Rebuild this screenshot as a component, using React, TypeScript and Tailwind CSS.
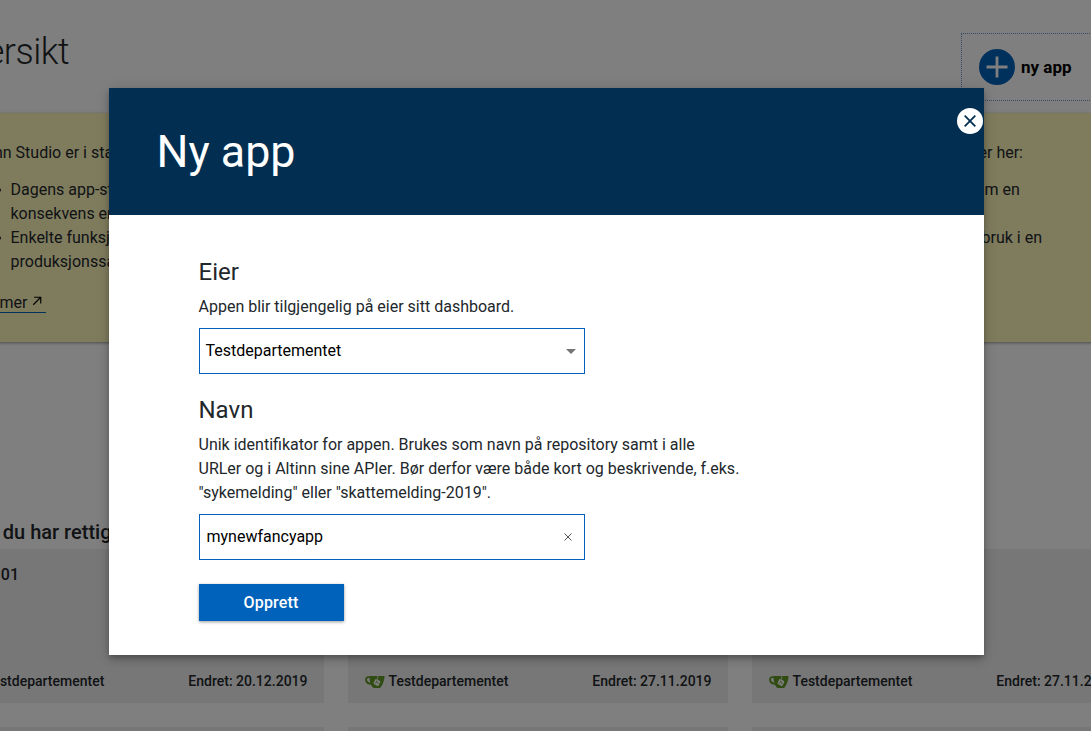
import React from "react";

function CupIcon() {
  return (
    <svg viewBox="0 0 20 14" className="h-[14px] w-5 shrink-0 translate-y-px">
      <path
        d="M5.500 2.300C2.800 1.700 1 2.400 1 4.600c.1 2.500 2.200 4 5.500 4.200"
        fill="none"
        stroke="#609926"
        strokeWidth="1.900"
      />
      <path
        d="M4.600.900h14.200c.7 0 .9.500.8 1.100-.6 3.800-1.700 7.400-3.600 10-.5.600-1 1-1.800 1.100H9.100c-.8 0-1.300-.4-1.700-1C5.500 9.500 4.400 5.500 4.600.900z"
        fill="#609926"
      />
      <path d="M12.700 1.200v3.300" stroke="#fff" strokeWidth=".7" />
      <rect x="9.100" y="4.700" width="5.600" height="5.600" rx="1.200" transform="rotate(26 11.900 7.500)" fill="#fff" />
      <path d="M11.900 5.600l-1.400 3M11.600 6.700l1.600.8-.7 1.600" fill="none" stroke="#609926" strokeWidth=".7" />
    </svg>
  );
}

function AppCard({ name, date }: { name: string; date: string }) {
  return (
    <div className="flex h-[154px] flex-col justify-between bg-[#efefef] pt-[14px] pr-[16.500px] pb-3 pl-4">
      <div className="w-[59px] text-right text-base leading-6 font-medium">{name}</div>
      <div className="flex items-center justify-between text-sm leading-5 font-medium">
        <div className="flex items-center gap-1 pl-[0.500px]">
          <CupIcon />
          <span>Testdepartementet</span>
        </div>
        <span>Endret: {date}</span>
      </div>
    </div>
  );
}

function Dashboard() {
  return (
    <div className="-ml-14 w-[1188px] shrink-0 text-[#22272b]">
      <header className="flex h-[113px] items-start justify-between pt-[33px]">
        <h1 className="w-[125px] text-right text-[36px] leading-[38px] font-light tracking-[-0.5px]">ersikt</h1>
        <div className="flex h-[68px] w-[171px] items-center gap-[6.500px] border border-dotted border-[#5f9bd3] pl-[16.500px]">
          <svg viewBox="0 0 36 36" className="size-9">
            <circle cx="18" cy="18" r="18" fill="#0062ba" />
            <path d="M18 7.500v21M7.500 18h21" stroke="#fff" strokeWidth="2.800" />
          </svg>
          <span className="text-[17px] leading-6 font-bold text-black">ny app</span>
        </div>
      </header>
      <section className="h-[229px] bg-[#fff8bd] px-6 pt-7 text-base leading-6 shadow-[0_1px_3px_rgba(0,0,0,0.4)]">
        <div className="flex justify-between">
          <p className="pl-[2.500px]">Altinn Studio er i stadig</p>
          <p className="w-[133px] pl-[3.500px]">er her:</p>
        </div>
        <ul className="mt-[13px] pl-[29px]">
          <li className="flex">
            <span className="mt-[10px] mr-[9.500px] size-1 rounded-full bg-current" />
            <p className="grow">
              Dagens app-stu
              <br />
              konsekvens er
            </p>
            <p className="w-[133px] pl-[9.500px]">m en</p>
          </li>
          <li className="flex">
            <span className="mt-[10px] mr-[9.500px] size-1 rounded-full bg-current" />
            <p className="grow">
              Enkelte funksjoner
              <br />
              produksjonssatt
            </p>
            <p className="w-[133px] pl-[6.500px]">bruk i en</p>
          </li>
        </ul>
        <a className="mt-[17px] flex h-[22px] w-[78px] items-center justify-end gap-[4.500px] border-b border-[#0062ba] pr-[4px]">
          <span className="pt-[3px]">mer</span>
          <svg viewBox="0 0 12 12" className="-mt-0.5 size-2.5 text-black" fill="none" stroke="currentColor" strokeWidth="1.400">
            <path d="M1.500 10.500L10.500 1.500M2.500 1.500h8V9" />
          </svg>
        </a>
      </section>
      <h2 className="mt-[178px] pl-[0.500px] text-xl leading-6 font-medium">Apper du har rettigheter</h2>
      <div className="mt-[5px] grid grid-cols-[380px_380px_380px] gap-6">
        <AppCard name="01" date="20.12.2019" />
        <AppCard name="" date="27.11.2019" />
        <AppCard name="" date="27.11.2019" />
        <AppCard name="" date="27.11.2019" />
        <AppCard name="" date="27.11.2019" />
        <AppCard name="" date="27.11.2019" />
      </div>
    </div>
  );
}

function NewAppDialog() {
  return (
    <div className="h-[567px] w-[875px] bg-white text-[#22272b] shadow-[0_3px_5px_-1px_rgba(0,0,0,0.2),0_5px_8px_0_rgba(0,0,0,0.14),0_1px_14px_0_rgba(0,0,0,0.12)]">
      <header className="flex h-[127px] items-start justify-between bg-[#022f51] pl-[47.500px]">
        <h1 className="pt-[37px] text-[44.8px] leading-[54px] text-white">Ny app</h1>
        <button className="mt-5 mr-px" aria-label="Lukk">
          <svg viewBox="0 0 26 26" className="size-[26px]">
            <circle cx="13" cy="13" r="13" fill="#fff" />
            <path d="M7.700 7.700l10.600 10.600M18.300 7.700L7.700 18.300" stroke="#022f51" strokeWidth="1.800" />
          </svg>
        </button>
      </header>
      <main className="pt-[42px] pl-[89.500px] text-base leading-6">
        <h2 className="text-2xl leading-[30px]">Eier</h2>
        <p className="mt-2">Appen blir tilgjengelig på eier sitt dashboard.</p>
        <div className="mt-[9px] flex h-[46px] w-[386px] items-center justify-between border border-[#0062ba] pr-2 pl-1.5 text-black">
          <span>Testdepartementet</span>
          <svg viewBox="0 0 10 5" className="h-[5px] w-[10px] fill-[#757575]">
            <path d="M0 0h10L5 5z" />
          </svg>
        </div>
        <h2 className="mt-[21px] text-2xl leading-[30px]">Navn</h2>
        <p className="mt-2 w-[560px]">
          Unik identifikator for appen. Brukes som navn på repository samt i alle
          <br />
          URLer og i Altinn sine APIer. Bør derfor være både kort og beskrivende, f.eks.
          <br />
          "sykemelding" eller "skattemelding-2019".
        </p>
        <div className="mt-[9px] flex h-[46px] w-[386px] items-center justify-between border border-[#0062ba] pr-3 pl-[7px] text-black">
          <span>mynewfancyapp</span>
          <svg viewBox="0 0 8 8" className="size-2" stroke="#555" strokeWidth="1">
            <path d="M.5.500l7 7M7.500.500l-7 7" />
          </svg>
        </div>
        <button className="mt-6 h-[37px] w-[145px] bg-[#0062ba] text-base font-medium tracking-[0.15px] text-white shadow-[0_1px_3px_rgba(0,0,0,0.4)]">
          Opprett
        </button>
      </main>
    </div>
  );
}

export default function App() {
  return (
    <div className="relative flex h-[731px] w-[1091px] overflow-hidden bg-white font-[Roboto,sans-serif]">
      <Dashboard />
      <div className="absolute inset-0 bg-black/50 pt-[88px] pl-[109px]">
        <NewAppDialog />
      </div>
    </div>
  );
}
